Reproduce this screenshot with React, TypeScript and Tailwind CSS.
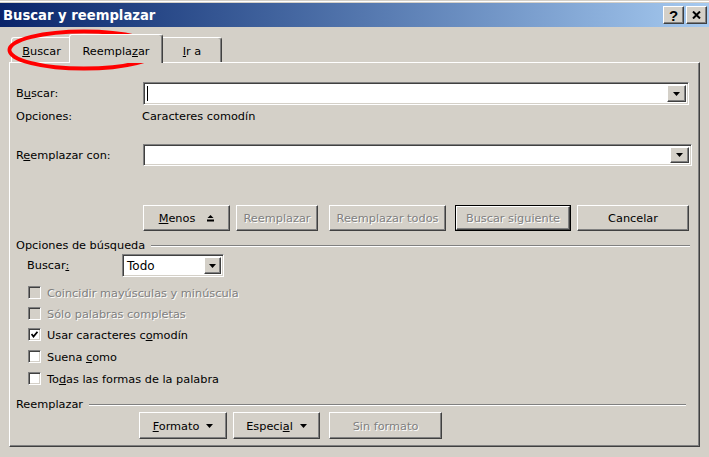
import React from "react";

const raised =
  "border border-t-white border-l-white border-r-[#404040] border-b-[#404040] shadow-[inset_-1px_-1px_#808080]";
const sunken =
  "border border-t-[#808080] border-l-[#808080] border-r-white border-b-white shadow-[inset_1px_1px_#404040,inset_-1px_-1px_#d4d0c8]";
const disabledText = "text-[#808080] [text-shadow:1px_1px_0_#ffffff]";

function DownArrow() {
  return (
    <svg width="7" height="4" viewBox="0 0 7 4">
      <polygon points="0,0 7,0 3.5,4" fill="#000" />
    </svg>
  );
}

function DropBtn({ w }: { w: string }) {
  return (
    <div className={`${raised} ${w} h-full flex items-center justify-center bg-[#d4d0c8]`}>
      <DownArrow />
    </div>
  );
}

function Btn({
  className,
  children,
  disabled,
  isDefault,
}: {
  className: string;
  children: React.ReactNode;
  disabled?: boolean;
  isDefault?: boolean;
}) {
  const inner = (
    <div
      className={`${raised} w-full h-full flex items-center justify-center pt-[2px] bg-[#d4d0c8] ${
        disabled ? disabledText : "text-black"
      }`}
    >
      {children}
    </div>
  );
  if (isDefault) {
    return <div className={`${className} border border-black`}>{inner}</div>;
  }
  return <div className={className}>{inner}</div>;
}

function CheckBox({ checked, disabled }: { checked?: boolean; disabled?: boolean }) {
  return (
    <div
      className={`${sunken} w-[13px] h-[13px] flex items-center justify-center ${
        disabled ? "bg-[#d4d0c8]" : "bg-white"
      }`}
    >
      {checked && (
        <svg width="7" height="7" viewBox="0 0 7 7">
          <polyline points="0.5,3 2.5,5.5 6.5,0.8" fill="none" stroke="#000" strokeWidth="1.8" />
        </svg>
      )}
    </div>
  );
}

function GroupLine() {
  return <div className="flex-1 h-[2px] border-t border-t-[#808080] border-b border-b-white ml-[6px]" />;
}

export default function App() {
  return (
    <div className="w-[709px] h-[457px] bg-[#d4d0c8] relative overflow-hidden font-['DejaVu_Sans',sans-serif] text-[11.3px] text-black leading-none">
      <div className="h-px bg-[#d4d0c8]" />
      <div className="h-px bg-white" />
      <div className="h-px bg-[#d4d0c8]" />
      {/* Title bar */}
      <div className="h-[24px] bg-gradient-to-r from-[#0a246a] to-[#a6caf0] flex items-center pl-[3px] pr-[2px]">
        <div className="text-white font-bold text-[13.2px] font-['DejaVu_Sans',sans-serif] flex-1 pt-[1px]">
          Buscar y reemplazar
        </div>
        <div className={`${raised} w-[21px] h-[18px] bg-[#d4d0c8] flex items-center justify-center`}>
          <span className="font-bold text-[15px] text-black font-['Liberation_Sans',sans-serif]">?</span>
        </div>
        <div className={`${raised} ml-[2px] w-[21px] h-[18px] bg-[#d4d0c8] flex items-center justify-center`}>
          <svg width="9" height="8" viewBox="0 0 9 8">
            <path d="M1 0.5 L8 7.5 M8 0.5 L1 7.5" stroke="#000" strokeWidth="2" />
          </svg>
        </div>
      </div>

      {/* Tabs */}
      <div className="mt-[7px] h-[28px] flex items-end pl-[11px]">
        <div className="w-[60px] h-[25px] border-t border-l border-t-white border-l-white rounded-tl-[3px] flex items-center justify-center pt-[3px]">
          <span>
            <u>B</u>uscar
          </span>
        </div>
        <div className="relative z-10 ml-[-2px] mb-[-1px] w-[94px] h-[29px] bg-[#d4d0c8] border-t border-l border-r border-t-white border-l-white border-r-[#404040] shadow-[inset_-1px_0_#808080] rounded-t-[3px] flex items-start justify-center pt-[11px]">
          <span>
            Reempla<u>z</u>ar
          </span>
        </div>
        <div className="ml-[-2px] w-[61px] h-[25px] border-t border-r border-t-white border-r-[#404040] shadow-[inset_-1px_0_#808080] rounded-tr-[3px] flex items-center justify-center pt-[3px] pl-[2px]">
          <span>
            <u>I</u>r a
          </span>
        </div>
      </div>

      {/* Panel */}
      <div className="ml-[9px] w-[691px] h-[385px] border border-t-white border-l-white border-r-[#404040] border-b-[#404040] shadow-[inset_-1px_-1px_#808080]">
        <div className="pl-[6px] pt-[19px]">
          {/* Buscar */}
          <div className="flex items-center h-[23px]">
            <div className="w-[127px] pt-[1px]">
              B<u>u</u>scar:
            </div>
            <div className={`${sunken} w-[546px] h-[23px] bg-white flex items-stretch p-[2px]`}>
              <div className="flex-1 flex items-center pl-[1px]">
                <div className="w-px h-[15px] bg-black" />
              </div>
              <DropBtn w="w-[19px]" />
            </div>
          </div>
          {/* Opciones */}
          <div className="flex items-center h-[14px] mt-[5px]">
            <div className="w-[126px]">Opciones:</div>
            <div>Caracteres comodín</div>
          </div>
          {/* Reemplazar con */}
          <div className="flex items-center h-[22px] mt-[20px]">
            <div className="w-[127px] pt-[1px]">
              R<u>e</u>emplazar con:
            </div>
            <div className={`${sunken} w-[549px] h-[22px] bg-white flex items-stretch justify-end p-[2px]`}>
              <DropBtn w="w-[19px]" />
            </div>
          </div>
          {/* Buttons */}
          <div className="flex h-[26px] mt-[39px] pl-[127px]">
            <Btn className="w-[87px] h-[26px]">
              <span>
                <u>M</u>enos
              </span>
              <svg className="ml-[12px] mb-[2px]" width="7" height="7" viewBox="0 0 7 7">
                <polygon points="3.5,0 6.5,3 0.5,3" fill="#000" />
                <rect x="0" y="4.5" width="7" height="2" fill="#000" />
              </svg>
            </Btn>
            <Btn className="ml-[6px] w-[82px] h-[26px]" disabled>
              Reemplazar
            </Btn>
            <Btn className="ml-[11px] w-[117px] h-[26px]" disabled>
              Reemplazar todos
            </Btn>
            <Btn className="ml-[9px] w-[116px] h-[26px]" disabled isDefault>
              Buscar siguiente
            </Btn>
            <Btn className="ml-[6px] w-[112px] h-[26px]">Cancelar</Btn>
          </div>
          {/* Opciones de búsqueda */}
          <div className="flex items-center h-[14px] mt-[8px] w-[674px]">
            <div>Opciones de búsqueda</div>
            <GroupLine />
          </div>
          {/* Buscar: Todo */}
          <div className="flex items-center h-[23px] mt-[1px] pl-[11px]">
            <div className="w-[95px] pt-[1px]">
              Buscar<u>:</u>
            </div>
            <div className={`${sunken} w-[102px] h-[23px] bg-white flex items-stretch p-[2px]`}>
              <div className="flex-1 flex items-center pl-[2px] pt-[1px] text-[12px]">Todo</div>
              <DropBtn w="w-[17px]" />
            </div>
          </div>
          {/* Checkboxes */}
          <div className="pl-[12px]">
            <div className="flex items-center h-[13px] mt-[9px]">
              <CheckBox disabled />
              <span className={`ml-[6px] relative top-[1px] ${disabledText}`}>Coincidir mayúsculas y minúscula</span>
            </div>
            <div className="flex items-center h-[13px] mt-[8px]">
              <CheckBox disabled />
              <span className={`ml-[6px] relative top-[1px] ${disabledText}`}>Sólo palabras completas</span>
            </div>
            <div className="flex items-center h-[13px] mt-[8px]">
              <CheckBox checked />
              <span className="ml-[6px] relative top-[1px]">
                Usar caracteres c<u>o</u>modín
              </span>
            </div>
            <div className="flex items-center h-[13px] mt-[9px]">
              <CheckBox />
              <span className="ml-[6px] relative top-[1px]">
                Suena <u>c</u>omo
              </span>
            </div>
            <div className="flex items-center h-[13px] mt-[9px]">
              <CheckBox />
              <span className="ml-[6px] relative top-[1px]">
                To<u>d</u>as las formas de la palabra
              </span>
            </div>
          </div>
          {/* Reemplazar group */}
          <div className="flex items-center h-[14px] mt-[13px] w-[670px]">
            <div>Reemplazar</div>
            <GroupLine />
          </div>
          <div className="flex h-[27px] mt-[0px] pl-[123px]">
            <Btn className="w-[88px] h-[27px]">
              <span>
                <u>F</u>ormato
              </span>
              <span className="ml-[7px] flex mb-[2px]">
                <DownArrow />
              </span>
            </Btn>
            <Btn className="ml-[6px] w-[87px] h-[27px]">
              <span>
                Especi<u>a</u>l
              </span>
              <span className="ml-[7px] flex mb-[2px]">
                <DownArrow />
              </span>
            </Btn>
            <Btn className="ml-[9px] w-[113px] h-[27px]" disabled>
              Sin formato
            </Btn>
          </div>
        </div>
      </div>

      {/* Red annotation ellipse */}
      <svg className="absolute left-0 top-0 pointer-events-none" width="709" height="457">
        <ellipse cx="84" cy="50" rx="74.5" ry="18.6" fill="none" stroke="#f00" strokeWidth="4" />
      </svg>
    </div>
  );
}
